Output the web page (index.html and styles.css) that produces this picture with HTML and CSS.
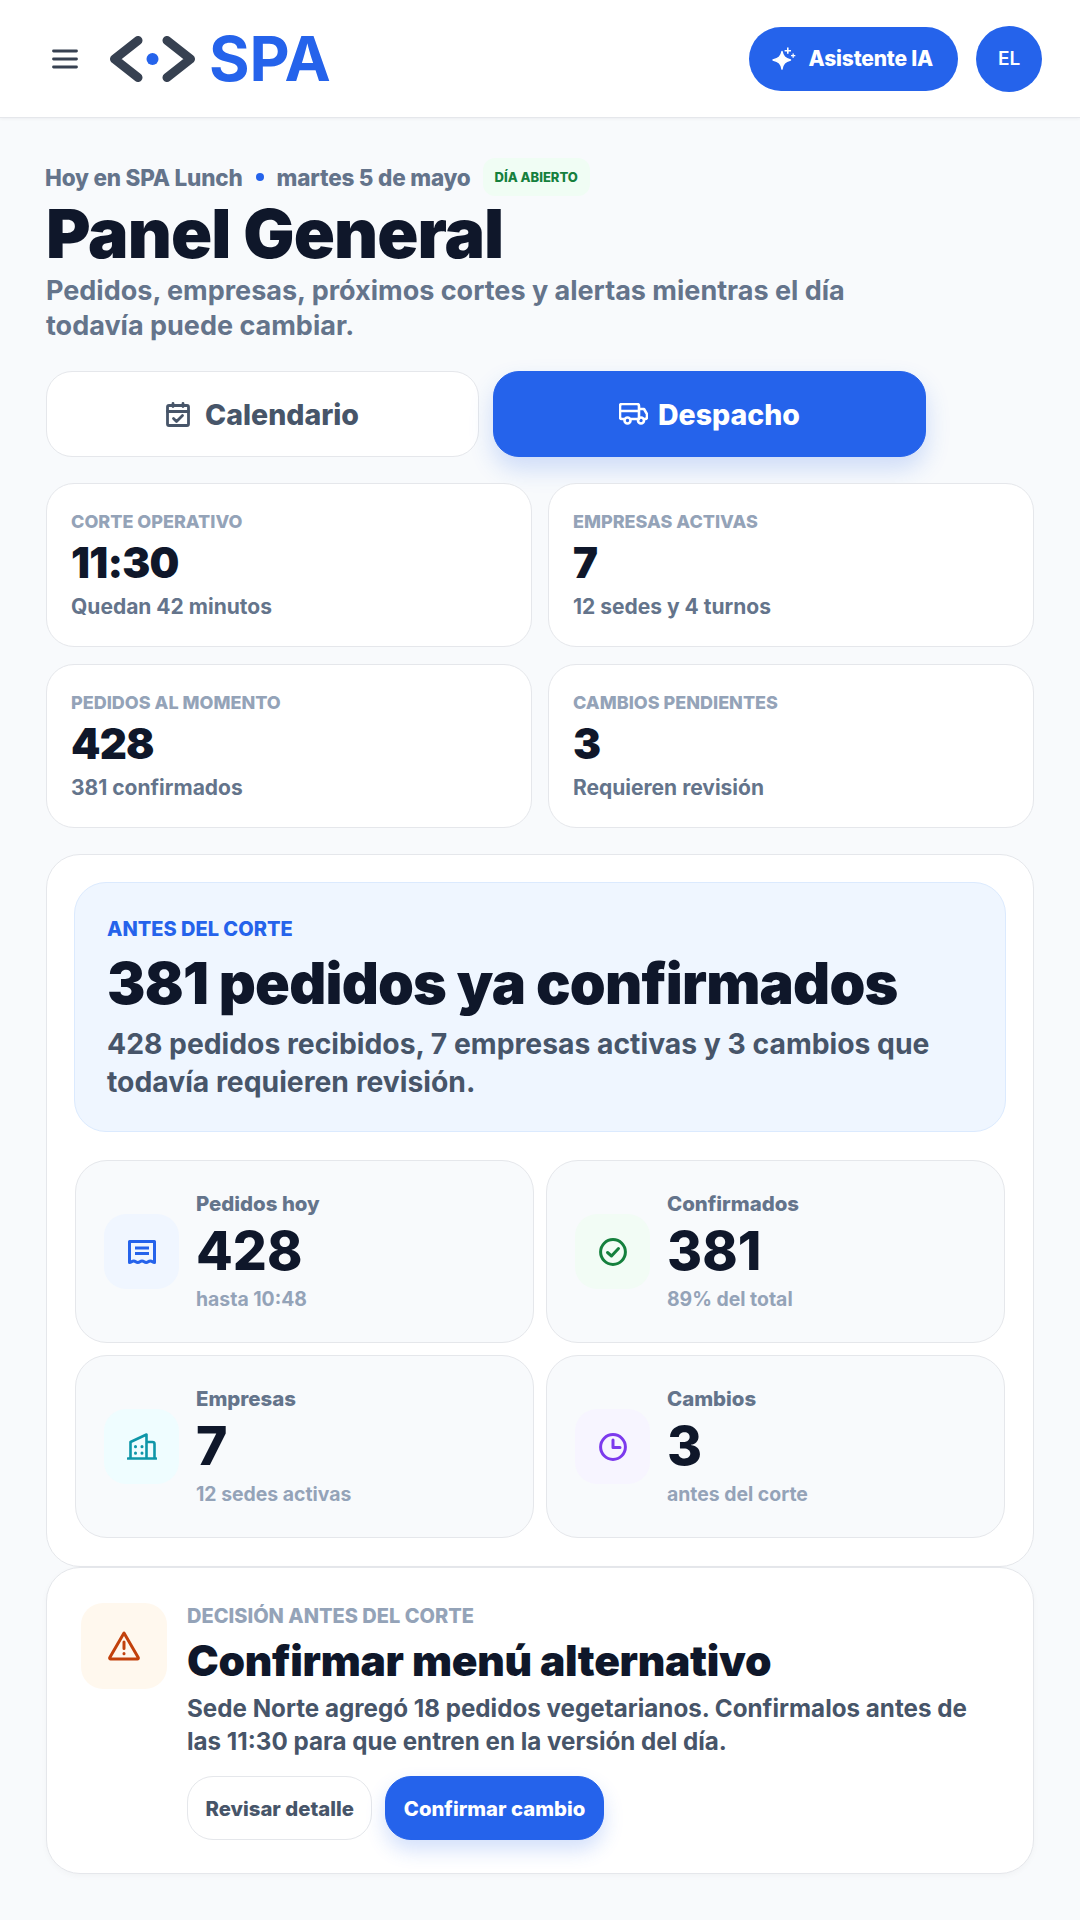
FILE: index.html
```html
<!DOCTYPE html>
<html lang="es">
<head>
  <meta charset="UTF-8" />
  <meta name="viewport" content="width=device-width, initial-scale=1.0"/>
  <title>SPA Lunch - Panel General</title>
  <link rel="stylesheet" href="styles.css">
</head>
<body>
  <header class="topbar">
    <div class="topbar-left">
      <button class="menu-btn" aria-label="Menu">
        <svg width="26" height="20" viewBox="0 0 26 20" fill="none" stroke="#374151" stroke-width="2.800" stroke-linecap="round"><path d="M1.500 2h23M1.500 10h23M1.500 18h23"/></svg>
      </button>
      <div class="logo">
        <svg class="logo-mark" width="85" height="46" viewBox="0 0 85 46" fill="none"><path d="M28 4.500 4.500 23 28 41.500M57 4.500 80.500 23 57 41.500" stroke="#374151" stroke-width="9" stroke-linecap="round" stroke-linejoin="round"/><circle cx="42.500" cy="23" r="6" fill="#2563eb"/></svg>
        <span class="logo-text">SPA</span>
      </div>
    </div>
    <div class="topbar-right">
      <button class="ai-btn">
        <svg width="24" height="26" viewBox="0 0 24 26" fill="#fff"><path d="M10 5.500c1 5 3 7 8.500 8.500-5.500 1.500-7.500 3.500-8.500 9-1-5.500-3-7.500-9-9 6-1.500 8-3.500 9-8.500z" stroke="#fff" stroke-width="1.400" stroke-linejoin="round"/><path d="M15 1.500h1.600v2.400H19v1.500h-2.400v2.400H15V5.400h-2.400V3.900H15zM20.500 7.500h1.300v1.500h1.500v1.300h-1.500v1.500h-1.300v-1.500H19V9h1.500z"/></svg>
        Asistente IA
      </button>
      <div class="avatar">EL</div>
    </div>
  </header>

  <main class="page">
    <div class="eyebrow">
      <span>Hoy en SPA Lunch</span>
      <span class="dot"></span>
      <span>martes 5 de mayo</span>
      <span class="badge-open">DÍA ABIERTO</span>
    </div>
    <h1>Panel General</h1>
    <p class="lead">Pedidos, empresas, próximos cortes y alertas mientras el día todavía puede cambiar.</p>

    <div class="tabs">
      <button class="tab">
        <svg width="24" height="25" viewBox="0 0 24 25" fill="none" stroke="#475569" stroke-width="2.800" stroke-linecap="round" stroke-linejoin="round"><rect x="1.500" y="3.500" width="21" height="20" rx="1.500"/><path d="M1.500 9.500h21M7 1.500v3M17 1.500v3M7.500 16.500l3 3 6-6"/></svg>
        Calendario
      </button>
      <button class="tab tab-active">
        <svg width="29" height="22" viewBox="0 0 29 22" fill="none" stroke="#fff" stroke-width="2.600" stroke-linecap="round" stroke-linejoin="round"><path d="M5 16H3a2 2 0 0 1-2-2V3a2 2 0 0 1 2-2h15a2 2 0 0 1 2 2v13M12 16h7M25 16h1a2 2 0 0 0 2-2v-3l-3-5h-5M1 8h19"/><circle cx="8.500" cy="17.500" r="3"/><circle cx="22" cy="17.500" r="3"/></svg>
        Despacho
      </button>
    </div>

    <section class="summary-grid">
      <div class="summary-card">
        <div class="summary-label">Corte operativo</div>
        <div class="summary-value">11:30</div>
        <div class="summary-sub">Quedan 42 minutos</div>
      </div>
      <div class="summary-card">
        <div class="summary-label">Empresas activas</div>
        <div class="summary-value">7</div>
        <div class="summary-sub">12 sedes y 4 turnos</div>
      </div>
      <div class="summary-card">
        <div class="summary-label">Pedidos al momento</div>
        <div class="summary-value">428</div>
        <div class="summary-sub">381 confirmados</div>
      </div>
      <div class="summary-card">
        <div class="summary-label">Cambios pendientes</div>
        <div class="summary-value">3</div>
        <div class="summary-sub">Requieren revisión</div>
      </div>
    </section>

    <section class="panel">
      <div class="hero">
        <div class="hero-label">ANTES DEL CORTE</div>
        <h2>381 pedidos ya confirmados</h2>
        <p>428 pedidos recibidos, 7 empresas activas y 3 cambios que todavía requieren revisión.</p>
      </div>
      <div class="stat-grid">
        <div class="stat-card">
          <div class="stat-icon icon-blue">
            <svg width="28" height="24" viewBox="0 0 28 24" fill="none" stroke="#2563eb" stroke-width="3" stroke-linejoin="round"><path d="M1.500 22.500V1.500h25v21c-2 0-2-1.500-4.200-1.500s-2.100 1.500-4.100 1.500-2.100-1.500-4.200-1.500-2.100 1.500-4.200 1.500-2-1.500-4.100-1.500-2.200 1.500-4.200 1.500z"/><path d="M7 8h14M7 13.500h14"/></svg>
          </div>
          <div>
            <div class="stat-label">Pedidos hoy</div>
            <div class="stat-value">428</div>
            <div class="stat-sub">hasta 10:48</div>
          </div>
        </div>
        <div class="stat-card">
          <div class="stat-icon icon-green">
            <svg width="28" height="28" viewBox="0 0 28 28" fill="none" stroke="#15803d" stroke-width="3" stroke-linecap="round" stroke-linejoin="round"><circle cx="14" cy="14" r="12.400"/><path d="m8.500 14.500 4 3.500 7-7.500"/></svg>
          </div>
          <div>
            <div class="stat-label">Confirmados</div>
            <div class="stat-value">381</div>
            <div class="stat-sub">89% del total</div>
          </div>
        </div>
        <div class="stat-card">
          <div class="stat-icon icon-cyan">
            <svg width="30" height="27" viewBox="0 0 30 27" fill="none" stroke="#0e96a8" stroke-width="2.600" stroke-linecap="round" stroke-linejoin="round"><path d="M1 25.500h28M3.500 25.500V9l16-7.500v24M19.500 9h6a2 2 0 0 1 2 2v14.500"/><path d="M8.500 13.500v.2M15 13.500v.2M8.500 20v.2M15 20v.2" stroke-width="3"/></svg>
          </div>
          <div>
            <div class="stat-label">Empresas</div>
            <div class="stat-value">7</div>
            <div class="stat-sub">12 sedes activas</div>
          </div>
        </div>
        <div class="stat-card">
          <div class="stat-icon icon-purple">
            <svg width="28" height="28" viewBox="0 0 28 28" fill="none" stroke="#7c3aed" stroke-width="3" stroke-linecap="round" stroke-linejoin="round"><circle cx="14" cy="14" r="12.400"/><path d="M14 7v7.500h7"/></svg>
          </div>
          <div>
            <div class="stat-label">Cambios</div>
            <div class="stat-value">3</div>
            <div class="stat-sub">antes del corte</div>
          </div>
        </div>
      </div>
    </section>

    <section class="decision">
      <div class="decision-icon">
        <svg width="32" height="30" viewBox="0 0 32 30" fill="none" stroke="#c2410c" stroke-width="3" stroke-linecap="round" stroke-linejoin="round"><path d="M16 2 1.800 26.500a1 1 0 0 0 1 1.500h26.400a1 1 0 0 0 1-1.500z"/><path d="M16 11v6.500M16 22.500v.3"/></svg>
      </div>
      <div class="decision-body">
        <div class="decision-label">DECISIÓN ANTES DEL CORTE</div>
        <h3>Confirmar menú alternativo</h3>
        <p>Sede Norte agregó 18 pedidos vegetarianos. Confirmalos antes de las 11:30 para que entren en la versión del día.</p>
        <div class="decision-actions">
          <button class="btn">Revisar detalle</button>
          <button class="btn btn-primary">Confirmar cambio</button>
        </div>
      </div>
    </section>
  </main>
</body>
</html>
```

FILE: styles.css
```css
* {
  box-sizing: border-box;
}
body {
  margin: 0;
  background-color: #f8fafc;
  color: #0f172a;
  font-family: Inter, 'Noto Sans', sans-serif;
}
button {
  font-family: inherit;
  cursor: pointer;
}
h1, h2, h3, p {
  margin: 0;
}

/* top bar */
.topbar {
  display: flex;
  align-items: center;
  justify-content: space-between;
  height: 118px;
  padding: 0 38px 0 52px;
  background-color: #fff;
  border-bottom: 1px solid #e5e7eb;
  box-shadow: 0 1px 3px rgba(15,23,42,0.05);
}
.topbar-left {
  display: flex;
  align-items: center;
  gap: 32px;
}
.menu-btn {
  display: flex;
  padding: 0;
  background: none;
  border: none;
}
.logo {
  display: flex;
  align-items: center;
  gap: 14px;
}
.logo-text {
  color: #2563eb;
  font-size: 62px;
  line-height: 1;
  font-weight: 700;
}
.topbar-right {
  display: flex;
  align-items: center;
  gap: 18px;
}
.ai-btn {
  display: flex;
  align-items: center;
  gap: 13px;
  height: 64px;
  padding: 0 25px 0 23px;
  background-color: #2563eb;
  color: #fff;
  border: none;
  border-radius: 32px;
  font-size: 21px;
  font-weight: 800;
  letter-spacing: -0.2px;
}
.avatar {
  display: flex;
  align-items: center;
  justify-content: center;
  width: 66px;
  height: 66px;
  border-radius: 50%;
  background-color: #2563eb;
  color: #fff;
  font-size: 19px;
  font-weight: 600;
}

/* page */
.page {
  padding: 40px 46px 46px;
}
.eyebrow {
  display: flex;
  align-items: center;
  height: 38px;
  margin-left: -1px;
  color: #64748b;
  font-size: 22.500px;
  font-weight: 800;
  letter-spacing: -0.2px;
}
.dot {
  width: 8px;
  height: 8px;
  margin: 0 13px;
  border-radius: 50%;
  background-color: #2563eb;
}
.badge-open {
  margin-left: 12px;
  padding: 11px 12px;
  background-color: #f0fdf4;
  color: #15803d;
  border-radius: 12px;
  font-size: 13px;
  font-weight: 800;
  line-height: 16px;
  letter-spacing: 0;
}
h1 {
  margin-top: 1px;
  font-size: 68px;
  line-height: 72px;
  font-weight: 900;
  letter-spacing: -0.900px;
}
.lead {
  max-width: 820px;
  margin-top: 4px;
  color: #64748b;
  font-size: 27px;
  line-height: 35px;
  font-weight: 700;
}
.tabs {
  display: grid;
  grid-template-columns: 433px 433px;
  gap: 14px;
  margin-top: 28px;
}
.tab {
  display: flex;
  align-items: center;
  justify-content: center;
  gap: 15px;
  height: 86px;
  background-color: #fff;
  color: #475569;
  border: 1px solid #e5e7eb;
  border-radius: 26px;
  font-size: 28.500px;
  font-weight: 800;
}
.tab-active {
  gap: 10px;
  background-color: #2563eb;
  border-color: #2563eb;
  color: #fff;
  box-shadow: 0 12px 24px rgba(37,99,235,0.2);
}

/* summary cards */
.summary-grid {
  display: grid;
  grid-template-columns: 1fr 1fr;
  gap: 17px 16px;
  margin-top: 26px;
}
.summary-card {
  height: 164px;
  padding: 26px 24px;
  background-color: #fff;
  border: 1px solid #e5e7eb;
  border-radius: 28px;
}
.summary-label {
  color: #94a3b8;
  font-size: 18px;
  line-height: 24px;
  font-weight: 800;
  text-transform: uppercase;
}
.summary-value {
  margin-top: 4px;
  font-size: 42px;
  line-height: 50px;
  font-weight: 900;
  letter-spacing: -0.800px;
}
.summary-sub {
  margin-top: 5px;
  color: #64748b;
  font-size: 21px;
  line-height: 28px;
  font-weight: 700;
}

/* main panel */
.panel {
  margin-top: 26px;
  padding: 27px 27px 28px;
  background-color: #fff;
  border: 1px solid #e5e7eb;
  border-radius: 34px;
}
.hero {
  height: 250px;
  padding: 32px 32px;
  background-color: #eff6ff;
  border: 1px solid #dbeafe;
  border-radius: 32px;
}
.hero-label {
  color: #2563eb;
  font-size: 20px;
  line-height: 28px;
  font-weight: 800;
}
.hero h2 {
  margin-top: 5px;
  font-size: 57.500px;
  line-height: 70px;
  font-weight: 900;
  letter-spacing: -0.800px;
}
.hero p {
  margin-top: 7px;
  color: #475569;
  font-size: 28.300px;
  line-height: 38px;
  font-weight: 700;
}
.stat-grid {
  display: grid;
  grid-template-columns: 1fr 1fr;
  gap: 12px;
  margin: 28px 1px 0;
}
.stat-card {
  display: flex;
  align-items: center;
  gap: 17px;
  height: 183px;
  padding: 0 28px;
  background-color: #f8fafc;
  border: 1px solid #e5e7eb;
  border-radius: 32px;
}
.stat-icon {
  display: flex;
  align-items: center;
  justify-content: center;
  flex-shrink: 0;
  width: 75px;
  height: 75px;
  border-radius: 22px;
}
.icon-blue { background-color: #f0f6ff; }
.icon-green { background-color: #f2fcf5; }
.icon-cyan { background-color: #effdff; }
.icon-purple { background-color: #f7f5ff; }
.stat-label {
  color: #64748b;
  font-size: 20.400px;
  line-height: 28px;
  font-weight: 800;
}
.stat-value {
  font-size: 53.500px;
  line-height: 66px;
  font-weight: 800;
}
.stat-sub {
  margin-top: 1px;
  color: #94a3b8;
  font-size: 19.400px;
  line-height: 28px;
  font-weight: 700;
}

/* decision card */
.decision {
  display: flex;
  gap: 20px;
  height: 307px;
  padding: 35px 34px;
  background-color: #fff;
  border: 1px solid #e5e7eb;
  border-radius: 34px;
  box-shadow: 0 2px 6px rgba(15,23,42,0.03);
}
.decision-icon {
  display: flex;
  align-items: center;
  justify-content: center;
  flex-shrink: 0;
  width: 86px;
  height: 86px;
  background-color: #fff8ee;
  border-radius: 22px;
}
.decision-label {
  color: #94a3b8;
  font-size: 20px;
  line-height: 26px;
  font-weight: 800;
}
.decision h3 {
  margin-top: 7px;
  font-size: 42.500px;
  line-height: 50px;
  font-weight: 900;
  letter-spacing: -0.300px;
}
.decision p {
  margin-top: 6px;
  color: #475569;
  font-size: 24.200px;
  line-height: 33px;
  font-weight: 700;
}
.decision-actions {
  display: flex;
  gap: 13px;
  margin-top: 18px;
}
.btn {
  height: 64px;
  padding: 0 17.500px;
  background-color: #fff;
  color: #475569;
  border: 1px solid #e5e7eb;
  border-radius: 26px;
  font-size: 20.300px;
  font-weight: 800;
}
.btn-primary {
  background-color: #2563eb;
  border-color: #2563eb;
  color: #fff;
  box-shadow: 0 10px 20px rgba(37,99,235,0.2);
}
```
